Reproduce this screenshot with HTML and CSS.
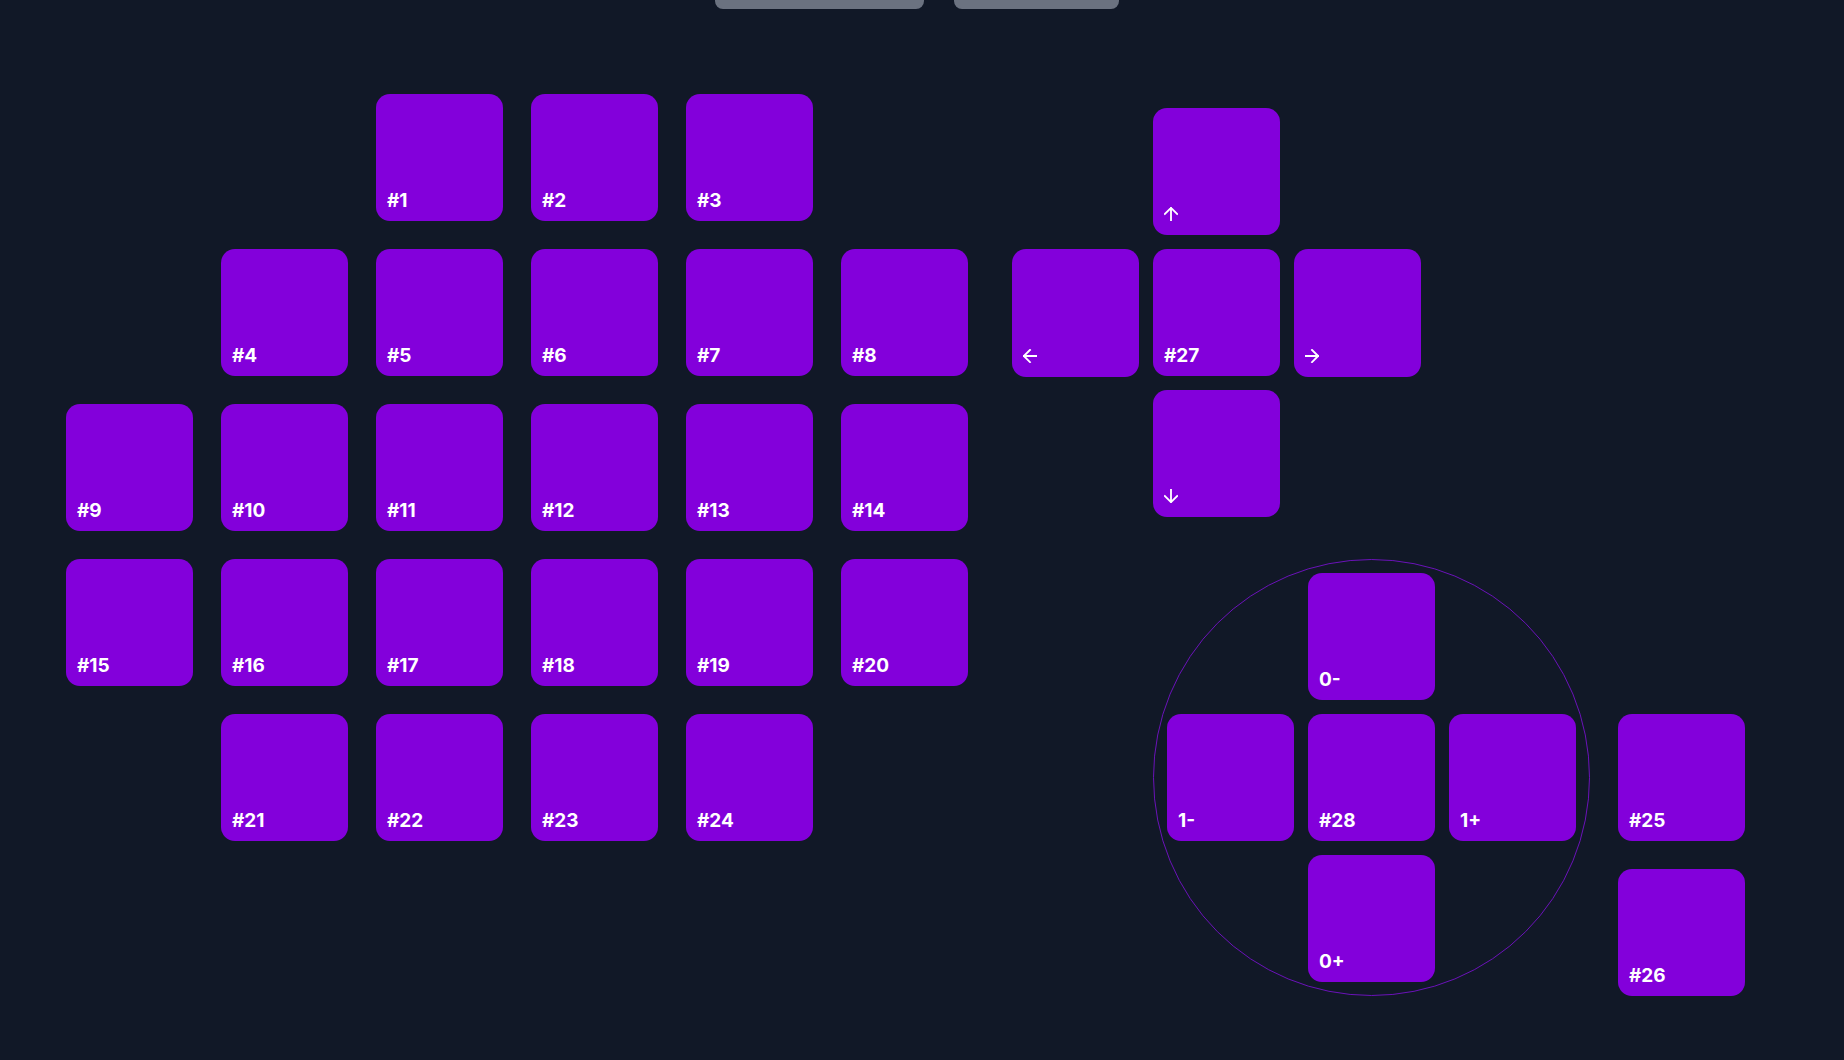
FILE: index.html
```html
<!DOCTYPE html>
<html>
<head>
<meta charset="utf-8">
<link rel="stylesheet" href="styles.css">
</head>
<body>
<div class="topbar">
  <div class="tbtn tbtn-a"></div>
  <div class="tbtn tbtn-b"></div>
</div>
<div class="main">
  <div class="keygrid">
    <div class="key c3 r1"><span>#1</span></div>
    <div class="key c4 r1"><span>#2</span></div>
    <div class="key c5 r1"><span>#3</span></div>
    <div class="key c2 r2"><span>#4</span></div>
    <div class="key c3 r2"><span>#5</span></div>
    <div class="key c4 r2"><span>#6</span></div>
    <div class="key c5 r2"><span>#7</span></div>
    <div class="key c6 r2"><span>#8</span></div>
    <div class="key c1 r3"><span>#9</span></div>
    <div class="key c2 r3"><span>#10</span></div>
    <div class="key c3 r3"><span>#11</span></div>
    <div class="key c4 r3"><span>#12</span></div>
    <div class="key c5 r3"><span>#13</span></div>
    <div class="key c6 r3"><span>#14</span></div>
    <div class="key c1 r4"><span>#15</span></div>
    <div class="key c2 r4"><span>#16</span></div>
    <div class="key c3 r4"><span>#17</span></div>
    <div class="key c4 r4"><span>#18</span></div>
    <div class="key c5 r4"><span>#19</span></div>
    <div class="key c6 r4"><span>#20</span></div>
    <div class="key c2 r5"><span>#21</span></div>
    <div class="key c3 r5"><span>#22</span></div>
    <div class="key c4 r5"><span>#23</span></div>
    <div class="key c5 r5"><span>#24</span></div>
  </div>
  <div class="right">
    <div class="cluster">
      <div class="key c2 r1"><svg class="ico" viewBox="4 4 16 16"><path d="M12 19V5M5 12l7-7 7 7"/></svg></div>
      <div class="key c1 r2 tall"><svg class="ico" viewBox="4 4 16 16"><path d="M19 12H5M12 19l-7-7 7-7"/></svg></div>
      <div class="key c2 r2"><span>#27</span></div>
      <div class="key c3 r2 tall"><svg class="ico" viewBox="4 4 16 16"><path d="M5 12h14M12 5l7 7-7 7"/></svg></div>
      <div class="key c2 r3"><svg class="ico" viewBox="4 4 16 16"><path d="M12 5v14M19 12l-7 7-7-7"/></svg></div>
    </div>
    <div class="lower">
      <div class="ring">
        <div class="cluster">
          <div class="key c2 r1"><span>0-</span></div>
          <div class="key c1 r2"><span>1-</span></div>
          <div class="key c2 r2"><span>#28</span></div>
          <div class="key c3 r2"><span>1+</span></div>
          <div class="key c2 r3"><span>0+</span></div>
        </div>
      </div>
      <div class="side">
        <div class="key"><span>#25</span></div>
        <div class="key"><span>#26</span></div>
      </div>
    </div>
  </div>
</div>
</body>
</html>
```
FILE: styles.css
```css
html, body {
  margin: 0;
  padding: 0;
  background: #111827;
  font-family: Inter, "Noto Sans", sans-serif;
  height: 100%;
  overflow: hidden;
}

.topbar {
  display: flex;
  gap: 30px;
  padding-left: 715px;
}

.tbtn {
  height: 9px;
  background: #6b7280;
  border-radius: 0 0 8px 8px;
}

.tbtn-a { width: 209px; }
.tbtn-b { width: 165px; }

.main {
  display: flex;
  align-items: flex-start;
  padding: 85px 0 0 66px;
}

.keygrid {
  display: grid;
  grid-template-columns: repeat(6, 127px);
  grid-template-rows: repeat(5, 127px);
  gap: 28px;
}

.key {
  width: 127px;
  height: 127px;
  box-sizing: border-box;
  background: #8300db;
  border-radius: 14px;
  display: flex;
  align-items: flex-end;
  padding: 0 10px 11px 11px;
  color: #ffffff;
  font-size: 19px;
  font-weight: 700;
  line-height: 1;
}

.key.tall { height: 128px; }

.c1 { grid-column: 1; }
.c2 { grid-column: 2; }
.c3 { grid-column: 3; }
.c4 { grid-column: 4; }
.c5 { grid-column: 5; }
.c6 { grid-column: 6; }
.r1 { grid-row: 1; }
.r2 { grid-row: 2; }
.r3 { grid-row: 3; }
.r4 { grid-row: 4; }
.r5 { grid-row: 5; }

.ico {
  width: 14px;
  height: 14px;
  display: block;
  margin: 0 0 3px 0;
  fill: none;
  stroke: #ffffff;
  stroke-width: 2.1;
  stroke-linecap: square;
  stroke-linejoin: miter;
}

.right {
  display: flex;
  flex-direction: column;
  margin-left: 44px;
  padding-top: 14px;
}

.cluster {
  display: grid;
  grid-template-columns: repeat(3, 127px);
  grid-template-rows: repeat(3, 127px);
  gap: 14px;
}

.lower {
  display: flex;
  align-items: flex-end;
  gap: 28px;
  margin-top: 42px;
  padding-left: 141px;
}

.ring {
  padding: 13px;
  border: 1px solid #6a12b8;
  border-radius: 50%;
}

.side {
  display: flex;
  flex-direction: column;
  gap: 28px;
}
```
